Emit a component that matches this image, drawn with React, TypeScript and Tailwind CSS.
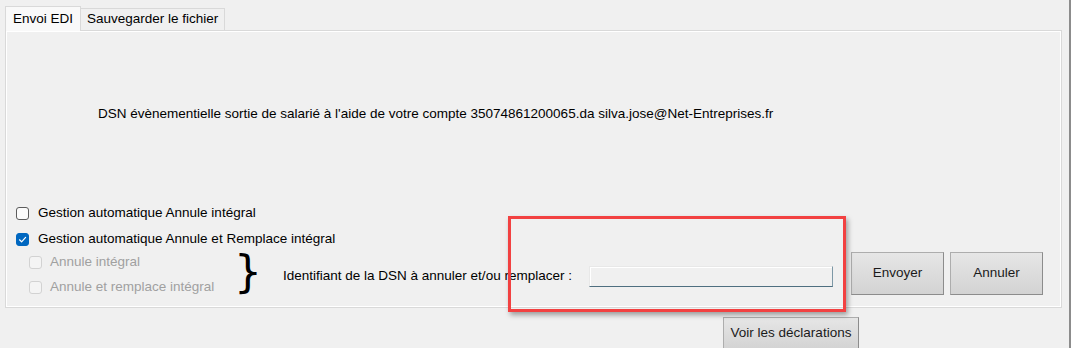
import React from 'react';

const font = { fontFamily: '"Liberation Sans", Arial, sans-serif' };

const Checkbox = ({ checked = false, disabled = false }: { checked?: boolean; disabled?: boolean }) => (
  <span
    className={`flex h-[13px] w-[13px] shrink-0 items-center justify-center rounded-[3px] border ${
      checked
        ? 'border-[#0067c0] bg-[#0067c0]'
        : disabled
        ? 'border-[#d2d2d2] bg-[#f4f4f4]'
        : 'border-[#5c5c5c] bg-[#fbfbfb]'
    }`}
  >
    {checked && (
      <svg width="9" height="9" viewBox="0 0 9 9" fill="none">
        <path d="M1.5 4.8 L3.6 6.8 L7.6 2.4" stroke="white" strokeWidth="1.2" strokeLinecap="round" strokeLinejoin="round" />
      </svg>
    )}
  </span>
);

const WinButton = ({ label, className = '' }: { label: string; className?: string }) => (
  <button
    className={`flex items-center justify-center border border-[#adadad] border-r-[#8c8c8c] border-b-[#8c8c8c] bg-gradient-to-b from-[#e6e6e6] to-[#d3d3d3] text-[13.5px] text-[#1a1a1a] ${className}`}
  >
    {label}
  </button>
);

const App = () => {
  return (
    <div className="relative h-[348px] w-[1071px] overflow-hidden border-r-[2px] border-[#8c8c8c] bg-[#f0f0f0] text-[13.5px] text-black" style={font}>
      {/* Tabs */}
      <div className="flex items-end pl-[5px] pt-[6px]">
        <div className="z-10 -mb-px flex h-[25px] items-center border border-b-0 border-[#d9d9d9] bg-[#f9f9f9] px-[7px]">
          Envoi EDI
        </div>
        <div className="flex h-[22px] items-center border border-l-0 border-b-0 border-[#d9d9d9] bg-[#f0f0f0] px-[6px]">
          Sauvegarder le fichier
        </div>
      </div>

      {/* Panel */}
      <div className="ml-[5px] flex h-[278px] w-[1057px] flex-col border border-[#d9d9d9] px-[10px] shadow-[inset_1px_1px_0_#ffffff,inset_-1px_-1px_0_#ffffff]">
        <p className="mt-[75px] pl-[82px] leading-[16px]">
          DSN évènementielle sortie de salarié à l'aide de votre compte 35074861200065.da silva.jose@Net-Entreprises.fr
        </p>

        <div className="mt-[78px] flex h-[26px] items-center gap-[9px]">
          <Checkbox />
          <span>Gestion automatique Annule intégral</span>
        </div>
        <div className="flex h-[26px] items-center gap-[9px]">
          <Checkbox checked />
          <span>Gestion automatique Annule et Remplace intégral</span>
        </div>

        <div className="flex items-center">
          <div className="-mt-[3px] flex w-[218px] flex-col pl-[13px] text-[#a0a0a0]">
            <div className="flex h-[25px] items-center gap-[8px]">
              <Checkbox disabled />
              <span>Annule intégral</span>
            </div>
            <div className="flex h-[25px] items-center gap-[8px]">
              <Checkbox disabled />
              <span>Annule et remplace intégral</span>
            </div>
          </div>
          <span className="-mt-[8px] w-[49px] text-[44px] leading-[42px]" style={{ fontFamily: '"DejaVu Sans", sans-serif' }}>
            {'}'}
          </span>
          <span className="w-[306px]">Identifiant de la DSN à annuler et/ou remplacer :</span>
          <div className="h-[21px] w-[244px] border border-[#e8e8e8] border-r-[#7d98a6] border-b-[#4f6f80] bg-[#f0f0f0] shadow-[inset_1px_1px_0_#ffffff]" />
          <div className="ml-[18px] mb-[5px] flex gap-[6px]">
            <WinButton label="Envoyer" className="h-[43px] w-[93px]" />
            <WinButton label="Annuler" className="h-[43px] w-[93px]" />
          </div>
        </div>
      </div>

      <WinButton label="Voir les déclarations" className="ml-[723px] mt-[9px] h-[33px] w-[136px]" />

      {/* red highlight overlay */}
      <div className="absolute left-[508px] top-[216px] h-[96px] w-[338px] border-[3px] border-[#f24141] shadow-[2px_3px_5px_rgba(0,0,0,0.35)]" />
    </div>
  );
};

export default App;
